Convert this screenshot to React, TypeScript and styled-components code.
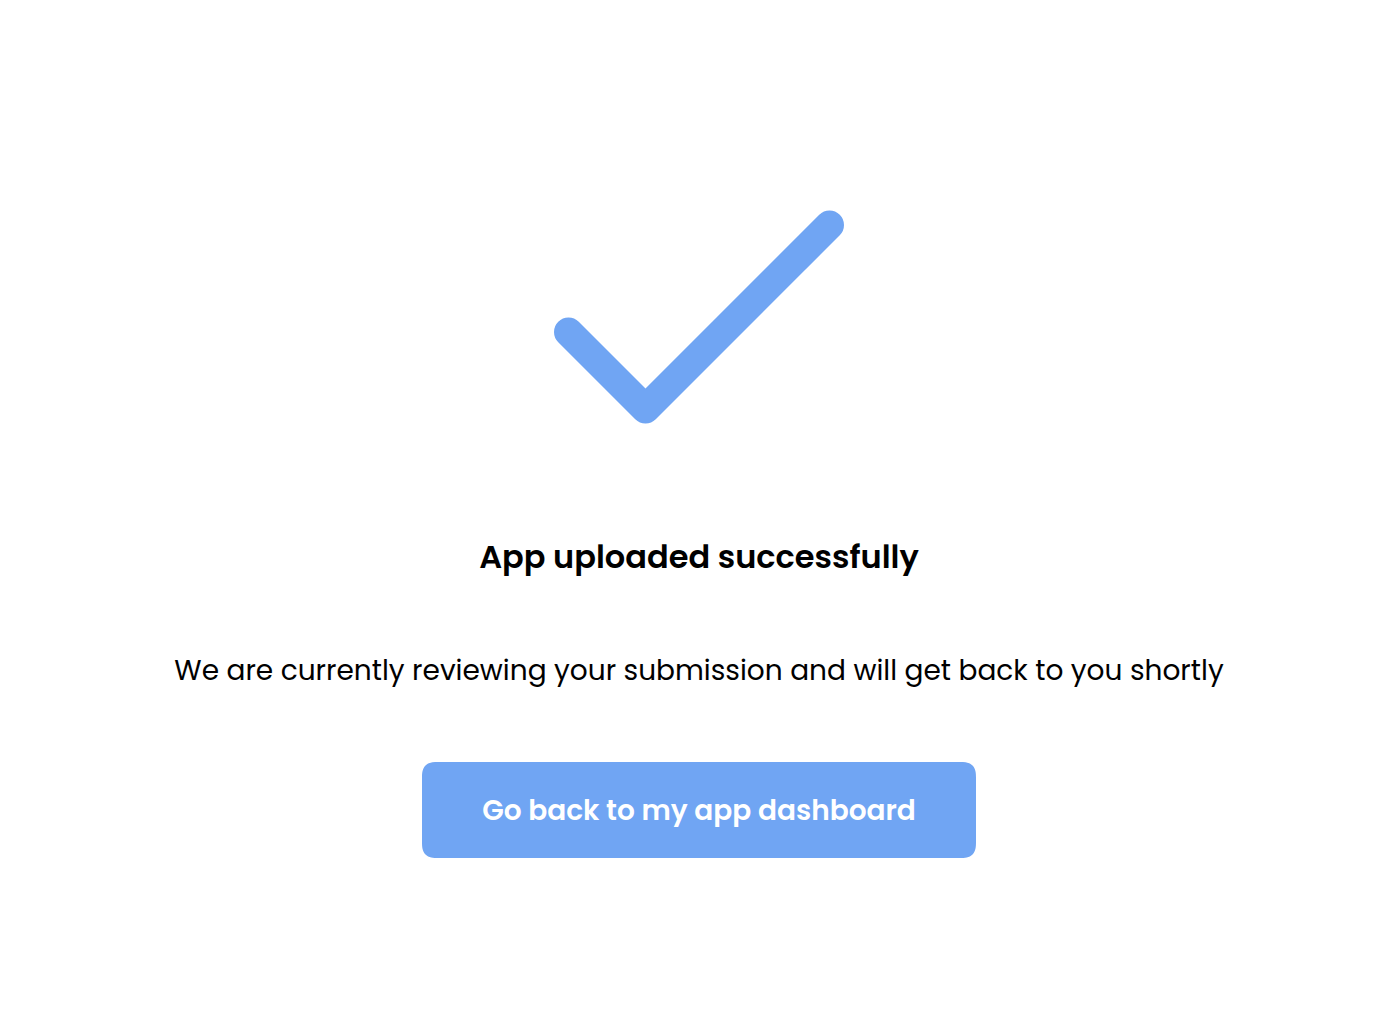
import React from "react";
import styled, { createGlobalStyle } from "styled-components";

const accent = "#70a5f3";

const GlobalStyle = createGlobalStyle`
  *, *::before, *::after { box-sizing: border-box; }
  body {
    margin: 0;
    background: #ffffff;
    color: #000000;
    font-family: Poppins, Inter, "Liberation Sans", sans-serif;
  }
`;

const Page = styled.main`
  min-height: 100vh;
  padding: 74px 32px 32px;
  display: flex;
  flex-direction: column;
  align-items: center;
  justify-content: center;
  text-align: center;
`;

const CheckMark = styled.svg`
  width: 290px;
  height: 214px;
  margin-bottom: 108px;
  max-width: 100%;
`;

const Title = styled.h1`
  margin: 0 0 65px;
  font-size: 32px;
  line-height: 50px;
  font-weight: 600;
`;

const Message = styled.p`
  margin: 0 0 67px;
  font-size: 28px;
  line-height: 48px;
`;

const DashboardButton = styled.button`
  min-height: 96px;
  padding: 25px 60px 23px;
  border: 0;
  border-radius: 16px;
  corner-shape: superellipse(1.5);
  background: ${accent};
  color: #ffffff;
  font: inherit;
  font-size: 28px;
  line-height: 48px;
  font-weight: 600;
  cursor: pointer;
`;

export default function App() {
  return (
    <>
      <GlobalStyle />
      <Page>
        <CheckMark viewBox="0 0 290 214" fill="none" aria-hidden="true">
          <path
            d="M14.5 122 L91.5 199 L275.5 15"
            stroke={accent}
            strokeWidth="29"
            strokeLinecap="round"
            strokeLinejoin="round"
          />
        </CheckMark>
        <Title>App uploaded successfully</Title>
        <Message>
          We are currently reviewing your submission and will get back to you shortly
        </Message>
        <DashboardButton type="button">Go back to my app dashboard</DashboardButton>
      </Page>
    </>
  );
}
